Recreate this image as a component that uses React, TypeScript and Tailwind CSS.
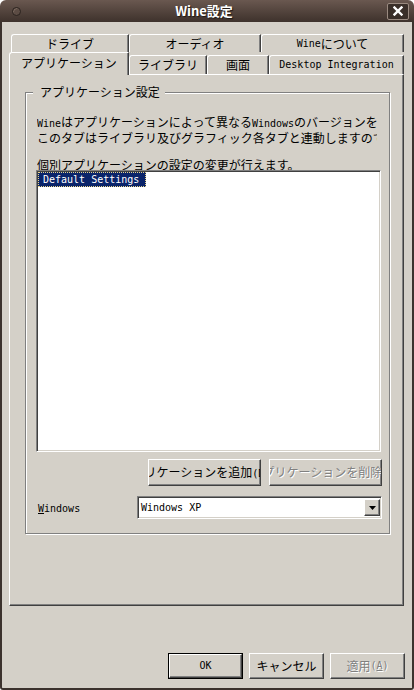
import React from 'react'

const LAT = "font-['DejaVu_Sans_Mono',monospace] text-[10px]"
const RAISED =
  'border border-t-white border-l-white border-b-[#404040] border-r-[#404040] bg-[#d4d0c8] shadow-[inset_-1px_-1px_0_#808080]'
const SUNKEN =
  'border border-t-[#808080] border-l-[#808080] border-b-white border-r-white shadow-[inset_1px_1px_0_#404040,inset_-1px_-1px_0_#d4d0c8]'
const DIS = 'text-[#808080] [text-shadow:1px_1px_0_#fff]'

// latin runs get the half-width mono font
function T({ s }: { s: string }) {
  const parts = s.split(/([\x21-\x7e][\x20-\x7e]*[\x21-\x7e]|[\x21-\x7e])/)
  return (
    <>
      {parts.map((p, i) =>
        i % 2 === 1 ? (
          <span key={i} className={LAT}>
            {p}
          </span>
        ) : (
          p
        )
      )}
    </>
  )
}

function BackTab({ label, w }: { label: string; w: string }) {
  return (
    <div
      className={`${w} flex h-[18px] items-center justify-center rounded-tl-[3px] border-t border-l border-r border-t-white border-l-white border-r-[#404040] shadow-[inset_-1px_0_0_#808080]`}
    >
      <T s={label} />
    </div>
  )
}

function FrontTab({ label, w, sel }: { label: string; w: string; sel?: boolean }) {
  if (sel) {
    return (
      <div
        className={`${w} relative z-10 -mb-px flex h-[23px] items-start justify-center rounded-tl-[3px] border-t border-l border-r border-t-white border-l-white border-r-[#404040] bg-[#d4d0c8] pt-[2px] shadow-[inset_-1px_0_0_#808080]`}
      >
        <T s={label} />
      </div>
    )
  }
  return (
    <div
      className={`${w} flex h-[19px] items-center justify-center rounded-tl-[3px] border-t border-l border-r border-t-white border-l-white border-r-[#404040] shadow-[inset_-1px_0_0_#808080]`}
    >
      <T s={label} />
    </div>
  )
}

export default function App() {
  return (
    <div className="flex h-[690px] w-[414px] flex-col font-['Noto_Sans_CJK_JP',sans-serif] text-[12px] leading-[16px] text-black">
      {/* title bar */}
      <div className="flex h-[22px] shrink-0 items-center rounded-t-[6px] bg-linear-to-b from-[#6a5850] to-[#3e322c] px-[2px]">
        <div className="ml-[10px] h-[9px] w-[9px] rounded-full border border-[#2a221e] bg-[#5c4c44] shadow-[inset_1px_1px_0_#7a685e]" />
        <div className="flex-1 text-center text-[13px] font-bold text-white [text-shadow:1px_1px_1px_#1e1814]">
          Wine設定
        </div>
        <div className="mr-[3px] flex h-[17px] w-[22px] items-center justify-center rounded-[2px] border border-[#9a8a80] bg-[#3a2f29]">
          <svg width="10" height="10" viewBox="0 0 10 10">
            <path d="M1.5 1.5 L8.5 8.5 M8.5 1.5 L1.5 8.5" stroke="#fff" strokeWidth="2.4" strokeLinecap="square" />
          </svg>
        </div>
      </div>

      {/* body */}
      <div className="flex flex-1 flex-col rounded-b-[3px] border-x-2 border-b-2 border-[#3b322d] bg-[#d4d0c8]">
        <div className="mt-[12px] ml-[9px] flex">
          <BackTab label="ドライブ" w="w-[118px]" />
          <BackTab label="オーディオ" w="w-[132px]" />
          <BackTab label="Wineについて" w="w-[143px]" />
        </div>
        <div className="ml-[7px] flex h-[22px] items-end">
          <FrontTab label="アプリケーション" w="w-[120px]" sel />
          <FrontTab label="ライブラリ" w="w-[78px]" />
          <FrontTab label="画面" w="w-[62px]" />
          <FrontTab label="Desktop Integration" w="w-[135px]" />
        </div>

        {/* tab panel */}
        <div className="ml-[7px] h-[532px] w-[395px] border border-t-white border-l-white border-b-[#404040] border-r-[#404040] shadow-[inset_-1px_-1px_0_#808080]">
          <div className="relative mt-[17px] ml-[15px] h-[442px] w-[365px] border border-[#808080] pt-[21px] pl-[10px] shadow-[1px_1px_0_#fff,inset_1px_1px_0_#fff]">
            <span className="absolute -top-[9px] left-[7px] bg-[#d4d0c8] pr-[5px] pl-[7px]">アプリケーション設定</span>

            <div className="ml-px w-[340px] overflow-hidden whitespace-nowrap">
              <div className="h-[16px]">
                <T s="Wineはアプリケーションによって異なるWindowsのバージョンを" />
              </div>
              <div className="h-[16px]">このタブはライブラリ及びグラフィック各タブと連動しますので</div>
              <div className="mt-[11px] h-[16px]">個別アプリケーションの設定の変更が行えます。</div>
            </div>

            <div className={`relative z-10 -mt-[3px] h-[282px] w-[345px] bg-white p-px ${SUNKEN}`}>
              <div className="flex h-[15px] w-[108px] items-center border border-dotted border-[#e8d488] bg-[#0a246a] pl-[4px] text-white">
                <span className={LAT}>Default Settings</span>
              </div>
            </div>

            <div className="mt-[7px] flex w-[345px] justify-end gap-[8px]">
              <div className={`flex h-[27px] w-[113px] justify-center items-center overflow-hidden whitespace-nowrap ${RAISED}`}>
                <span className="shrink-0">
                  <T s="アプリケーションを追加(D)..." />
                </span>
              </div>
              <div className={`-mr-px flex h-[27px] w-[113px] justify-center items-center overflow-hidden whitespace-nowrap ${RAISED} ${DIS}`}>
                <span className="shrink-0">
                  <T s="アプリケーションを削除(R)" />
                </span>
              </div>
            </div>

            <div className="mt-[10px] flex items-center">
              <div className="w-[101px] pl-[2px]">
                <span className={LAT}>
                  <span className="underline">W</span>indows
                </span>
              </div>
              <div className={`flex h-[23px] w-[245px] items-center bg-white pl-[3px] pr-px ${SUNKEN}`}>
                <span className={`flex-1 ${LAT}`}>Windows XP</span>
                <div className={`flex h-[17px] w-[16px] items-center justify-center ${RAISED}`}>
                  <svg width="7" height="4" viewBox="0 0 7 4">
                    <path d="M0 0 H7 L3.5 4 Z" fill="#000" />
                  </svg>
                </div>
              </div>
            </div>
          </div>
        </div>

        {/* dialog buttons */}
        <div className="mt-[47px] flex justify-end gap-[6px] pr-[7px]">
          <div className="h-[26px] w-[75px] border border-black">
            <div className={`flex h-full w-full items-center justify-center ${RAISED}`}>
              <span className={LAT}>OK</span>
            </div>
          </div>
          <div className={`flex h-[26px] w-[75px] items-center justify-center ${RAISED}`}>キャンセル</div>
          <div className={`flex h-[26px] w-[75px] items-center justify-center ${RAISED} ${DIS}`}>
            適用<span className={LAT}>(</span>
            <span className={`${LAT} underline`}>A</span>
            <span className={LAT}>)</span>
          </div>
        </div>
      </div>
    </div>
  )
}
